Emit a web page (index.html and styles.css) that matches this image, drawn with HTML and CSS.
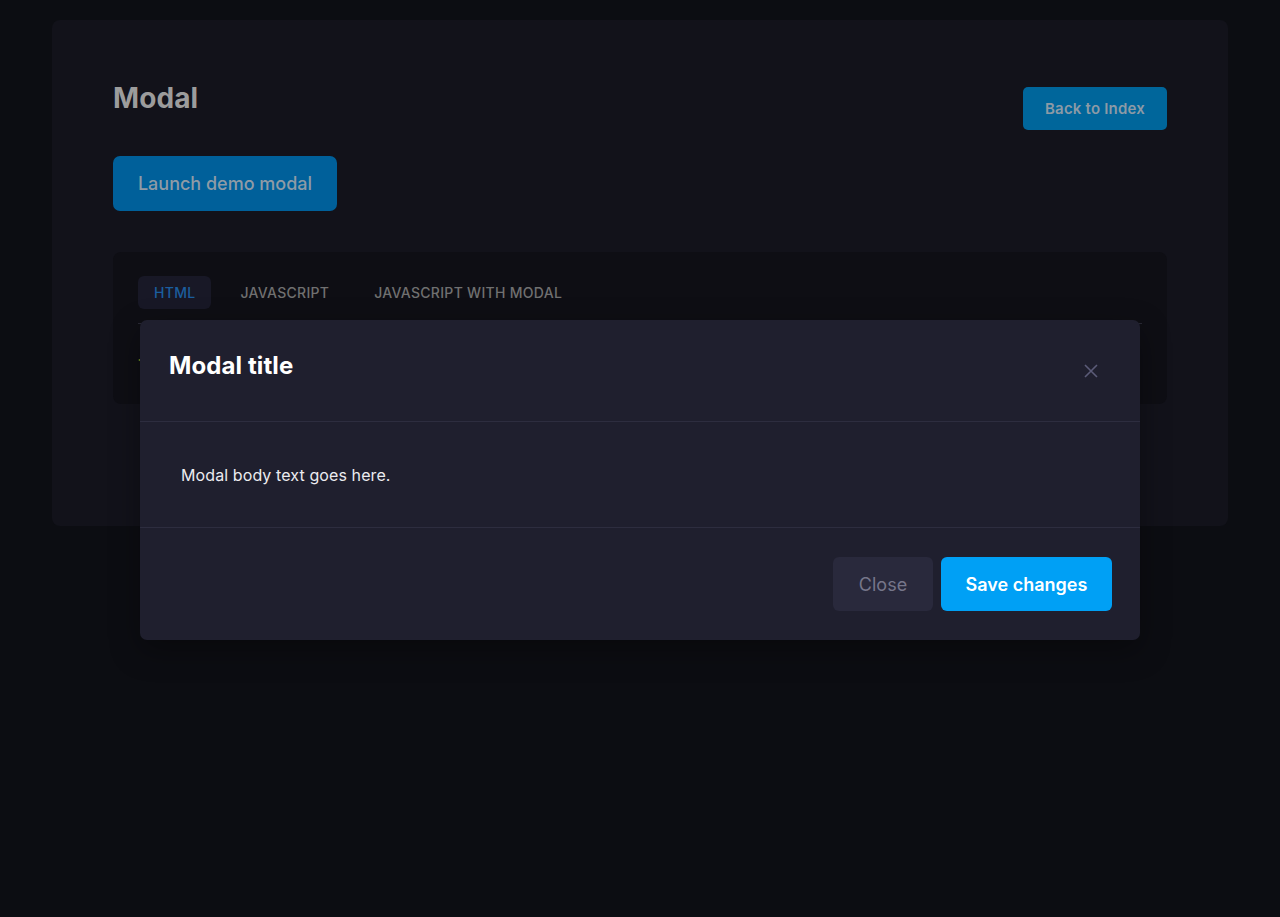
FILE: index.html
```html
<!DOCTYPE html>
<html>
<head>
<meta charset="utf-8">
<link rel="stylesheet" href="styles.css">
</head>
<body>
<div class="page">
  <div class="card">
    <div class="head">
      <h1 class="title">Modal</h1>
      <a class="btn-back">Back to Index</a>
    </div>
    <button class="btn-launch">Launch demo modal</button>
    <div class="code-panel">
      <div class="tabs">
        <span class="tab active">HTML</span>
        <span class="tab">JAVASCRIPT</span>
        <span class="tab">JAVASCRIPT WITH MODAL</span>
      </div>
      <pre class="code"><span class="c-y">&lt;</span></pre>
    </div>
  </div>
</div>
<div class="modal">
  <div class="m-header">
    <h2 class="m-title">Modal title</h2>
    <svg class="m-close" width="16" height="16" viewBox="0 0 16 16"><path d="M2 2L14 14M14 2L2 14" stroke="#5b5b78" stroke-width="1.6" fill="none"/></svg>
  </div>
  <div class="m-body">Modal body text goes here.</div>
  <div class="m-footer">
    <button class="btn-close">Close</button>
    <button class="btn-save">Save changes</button>
  </div>
</div>
</body>
</html>
```
FILE: styles.css
```css
* { box-sizing: border-box; }
html, body { margin: 0; padding: 0; }
body {
  background: #0c0d12;
  font-family: Inter, "Noto Sans", sans-serif;
  width: 1280px;
  height: 917px;
  overflow: hidden;
}
.page { padding: 20px 52px; }
.card {
  background: #12121a;
  border-radius: 8px;
  padding: 60px 61px 122px 61px;
  height: 506px;
}
.head {
  display: flex;
  justify-content: space-between;
  align-items: flex-start;
}
.title {
  margin: 0;
  font-size: 28px;
  font-weight: 700;
  color: #9c9c9c;
  line-height: 36px;
  letter-spacing: 0.1px;
}
.btn-back {
  margin-top: 7px;
  width: 144px;
  height: 43px;
  display: flex;
  align-items: center;
  justify-content: center;
  background: #00669b;
  color: #8c9aa6;
  font-size: 15px;
  font-weight: 600;
  letter-spacing: 0.2px;
  border-radius: 5px;
}
.btn-launch {
  margin-top: 26px;
  width: 224px;
  height: 55px;
  border: none;
  border-radius: 7px;
  background: #00609a;
  color: #8f9ba6;
  font-family: inherit;
  font-size: 18px;
  font-weight: 500;
  display: block;
}
.code-panel {
  margin-top: 41px;
  background: #0e0e14;
  border-radius: 8px;
  height: 152px;
  padding: 24px 25px;
}
.tabs { display: flex; align-items: center; }
.tab {
  font-size: 14px;
  font-weight: 500;
  color: #707070;
  letter-spacing: 0.3px;
  padding: 0 16px;
  height: 33px;
  line-height: 33px;
  border-radius: 6px;
  margin-right: 13px;
}
.tab.active {
  background: #181826;
  color: #1b5e9e;
}
.code {
  margin: 14px 0 0 0;
  font-family: "DejaVu Sans Mono", monospace;
  font-size: 13px;
  color: #6b6b6b;
  border-top: 1px solid #2a2a35;
  padding-top: 28px;
}
.c-y { color: #8a8a20; }
.modal {
  position: absolute;
  left: 140px;
  top: 320px;
  width: 1000px;
  background: #1f1f2e;
  border-radius: 7px;
  box-shadow: 0 10px 30px rgba(0,0,0,0.35);
}
.m-header {
  height: 102px;
  padding: 0 41px 0 29px;
  display: flex;
  align-items: flex-start;
  justify-content: space-between;
  border-bottom: 1px solid #2d2d3f;
}
.m-title {
  margin: 0;
  margin-top: 31px;
  font-size: 24px;
  line-height: 30px;
  font-weight: 700;
  color: #ffffff;
  letter-spacing: 0.1px;
}
.m-close { margin-top: 43px; }
.m-body {
  height: 106px;
  padding: 0 41px;
  display: flex;
  align-items: center;
  font-size: 16px;
  letter-spacing: 0.1px;
  color: #ececf0;
  border-bottom: 1px solid #2d2d3f;
}
.m-footer {
  height: 112px;
  display: flex;
  justify-content: flex-end;
  align-items: center;
  padding: 0 28px;
  gap: 8px;
}
.btn-close, .btn-save {
  height: 54px;
  border: none;
  border-radius: 6px;
  font-family: inherit;
  font-size: 18px;
}
.btn-close {
  width: 100px;
  background: #29293c;
  color: #76768a;
  font-weight: 400;
}
.btn-save {
  width: 171px;
  background: #00a0f5;
  color: #ffffff;
  font-weight: 600;
}
```
